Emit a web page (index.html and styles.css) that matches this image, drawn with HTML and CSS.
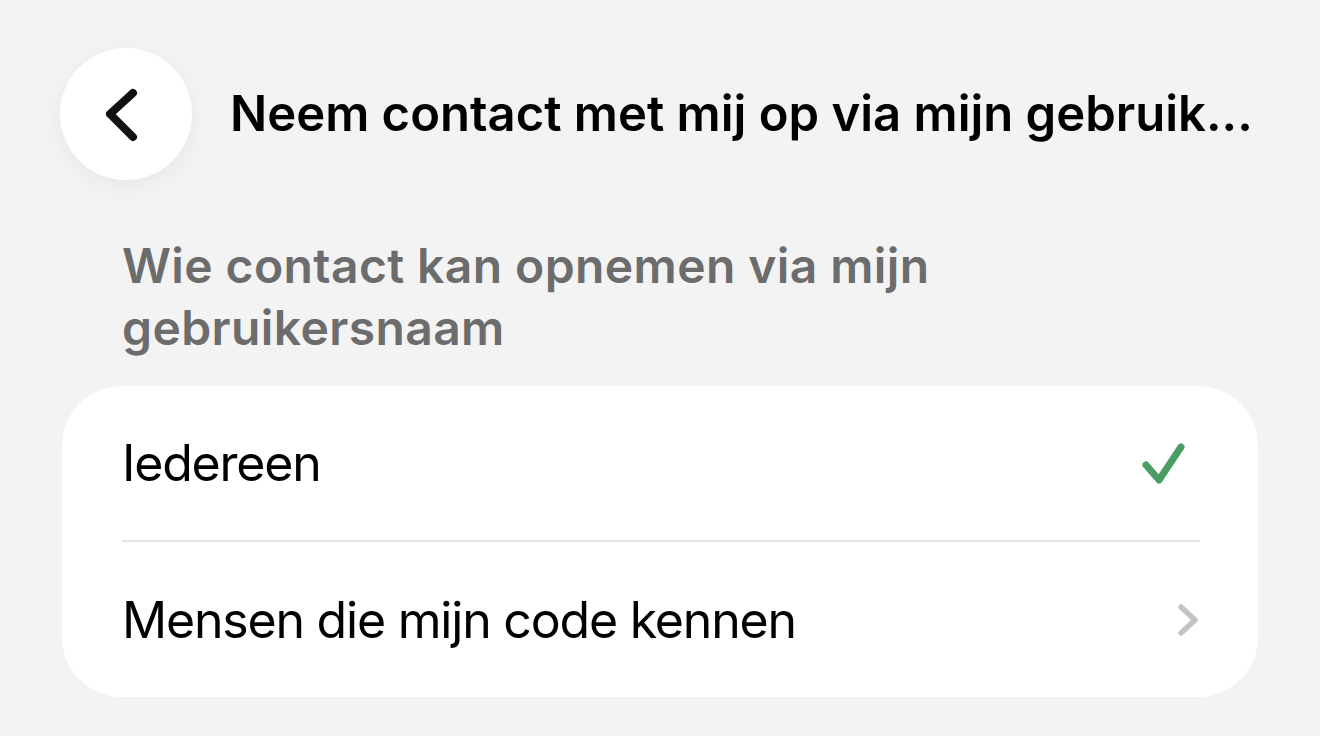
FILE: index.html
```html
<!DOCTYPE html>
<html lang="nl">
<head>
<meta charset="utf-8">
<title>Gebruikersnaam</title>
<link rel="stylesheet" href="styles.css">
</head>
<body>
<header class="nav">
  <button class="back" aria-label="Terug">
    <svg width="132" height="132" viewBox="0 0 132 132"><path d="M73 45 L50 66 L73 89" fill="none" stroke="#111" stroke-width="8" stroke-linecap="round" stroke-linejoin="round"/></svg>
  </button>
  <h1 class="title">Neem contact met mij op via mijn gebruik...</h1>
</header>
<main class="content">
  <p class="section-label">Wie contact kan opnemen via mijn gebruikersnaam</p>
  <section class="card">
    <div class="row">
      <span class="row-text">Iedereen</span>
      <svg class="check" width="60" height="48" viewBox="0 0 60 48"><path d="M6 26 L19 41 L41 8" fill="none" stroke="#4a9d63" stroke-width="7" stroke-linecap="round" stroke-linejoin="round"/></svg>
    </div>
    <div class="divider"></div>
    <div class="row">
      <span class="row-text">Mensen die mijn code kennen</span>
      <svg class="chev" width="24" height="40" viewBox="0 0 24 40"><path d="M5 7 L19 20 L5 33" fill="none" stroke="#c4c4c6" stroke-width="5.5" stroke-linecap="round" stroke-linejoin="round"/></svg>
    </div>
  </section>
</main>
</body>
</html>
```
FILE: styles.css
```css
html, body {
  margin: 0;
  padding: 0;
}
body {
  background: #f3f3f3;
  font-family: "Inter", "Liberation Sans", sans-serif;
  color: #000;
  width: 1320px;
  height: 736px;
  overflow: hidden;
}
.nav {
  display: flex;
  align-items: center;
  padding: 48px 62px 0 60px;
  gap: 38px;
  height: 132px;
}
.back {
  flex: 0 0 auto;
  width: 132px;
  height: 132px;
  border-radius: 50%;
  border: none;
  padding: 0;
  background: #fff;
  box-shadow: 0 6px 24px rgba(0, 0, 0, 0.05);
  display: flex;
}
.title {
  margin: 0;
  font-size: 49px;
  font-weight: 600;
  letter-spacing: 0;
  white-space: nowrap;
  line-height: 60px;
}
.content {
  padding: 0 62px;
}
.section-label {
  margin: 55px 0 27px 0;
  padding: 0 60px;
  font-size: 48px;
  font-weight: 600;
  line-height: 62px;
  letter-spacing: 0.4px;
  color: #6c6c6c;
  max-width: 860px;
}
.card {
  background: #fff;
  border-radius: 60px;
  padding: 0 58px 0 60px;
}
.row {
  display: flex;
  align-items: center;
  justify-content: space-between;
  height: 154px;
}
.row:last-child {
  height: 155px;
}
.row-text {
  font-size: 50px;
  font-weight: 400;
  letter-spacing: -1.2px;
}
.divider {
  height: 2px;
  background: #e4e4e4;
}
```
